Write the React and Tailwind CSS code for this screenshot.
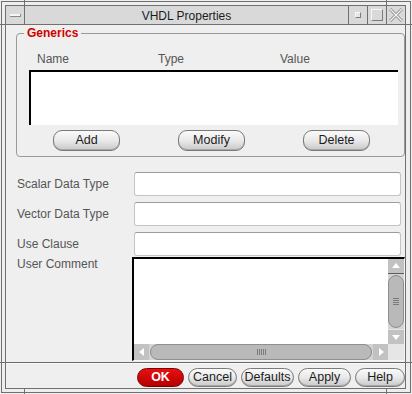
import React from 'react'

const line = 'border-[#707070]'
const pill =
  'flex items-center justify-center border border-[#7a7a7a] bg-linear-to-b from-[#fafafa] via-[#e9e9e9] to-[#c9c9c9] text-[#1c1c1c] shadow-[inset_0_-1px_0_#a9a9a9]'

function Arrow({ dir }) {
  const pts = {
    up: '1,7 5,2 9,7',
    down: '1,3 5,8 9,3',
    left: '7,1 2,5 7,9',
    right: '3,1 8,5 3,9',
  }
  return (
    <svg width="10" height="10" viewBox="0 0 10 10">
      <polygon points={pts[dir]} fill="#ffffff" />
    </svg>
  )
}

function TextRow({ label }) {
  return (
    <div className="flex items-center pl-[11px]">
      <div className="w-[117px] text-[12px] leading-[14px] text-[#555555]">{label}</div>
      <div className="w-[267px] h-[24px] bg-white rounded-[3px] border border-[#c4c4c4] border-t-[#9c9c9c]" />
    </div>
  )
}

export default function App() {
  return (
    <div className="relative w-[412px] h-[394px] bg-[#efefef] pt-px pl-px font-['Liberation_Sans',Arial,sans-serif]">
      {/* frame ticks */}
      <div className="absolute left-[24px] top-0 w-px h-[6px] bg-[#707070]" />
      <div className="absolute left-[386px] top-0 w-px h-[6px] bg-[#707070]" />
      <div className="absolute left-0 top-[24px] w-[6px] h-px bg-[#707070]" />
      <div className="absolute left-0 top-[362px] w-[6px] h-px bg-[#707070]" />
      <div className="absolute right-0 top-[24px] w-[7px] h-px bg-[#707070]" />
      <div className="absolute right-0 top-[362px] w-[7px] h-px bg-[#707070]" />
      <div className="absolute left-[24px] bottom-0 w-px h-[6px] bg-[#707070]" />
      <div className="absolute left-[386px] bottom-0 w-px h-[6px] bg-[#707070]" />

      <div className={`w-[410px] h-[392px] border ${line} pt-[3px] pl-[3px] pr-[4px] pb-[3px] bg-[#eeeeee]`}>
        <div className={`w-full h-full border ${line} bg-[#efefef] flex flex-col`}>
          {/* Title bar */}
          <div className={`flex h-[19px] border-b ${line} bg-[#d9d9d9]`}>
            <div className={`w-[19px] border-r ${line} flex items-center justify-center`}>
              <div className="w-[11px] h-[3px] bg-[#f6f6f6] border-b border-r border-[#8a8a8a]" />
            </div>
            <div className="flex-1 flex items-center justify-center text-[12px] text-[#1c1c1c] pt-px">
              VHDL Properties
            </div>
            <div className={`w-[19px] border-l ${line} flex items-center justify-center`}>
              <div className="w-[6px] h-[6px] bg-[#e6e6e6] border border-[#f8f8f8] border-b-[#7c7c7c] border-r-[#7c7c7c]" />
            </div>
            <div className={`w-[19px] border-l ${line} flex items-center justify-center`}>
              <div className="w-[12px] h-[12px] border border-[#f8f8f8] border-b-[#7c7c7c] border-r-[#7c7c7c]" />
            </div>
            <div className={`w-[19px] border-l ${line} flex items-center justify-center`}>
              <svg width="14" height="14" viewBox="0 0 14 14">
                <path d="M1 1 L13 13 M13 1 L1 13" stroke="#8c8c8c" strokeWidth="3" />
                <path d="M1 1 L13 13 M13 1 L1 13" stroke="#f4f4f4" strokeWidth="1.2" />
              </svg>
            </div>
          </div>

          {/* Generics group */}
          <div className="relative mt-[8px] ml-[10px] w-[389px] h-[124px] border border-[#9a9a9a] rounded-[4px]">
            <span className="absolute left-[7px] top-[-8px] px-[3px] bg-[#efefef] text-[12px] leading-[14px] font-bold text-[#d00000]">
              Generics
            </span>
            <div className="mt-[18px] flex h-[14px] pl-[20px] text-[12px] leading-[14px] text-[#555555]">
              <div className="w-[121px]">Name</div>
              <div className="w-[122px]">Type</div>
              <div>Value</div>
            </div>
            <div className="mt-[4px] ml-[12px] w-[369px] h-[55px] bg-white border-t-2 border-l-2 border-black" />
            <div className="mt-[5px] ml-[36px] flex gap-[58px] text-[12.5px]">
              <div className={`${pill} w-[67px] h-[21px] rounded-[9px]`}>Add</div>
              <div className={`${pill} w-[67px] h-[21px] rounded-[9px]`}>Modify</div>
              <div className={`${pill} w-[67px] h-[21px] rounded-[9px]`}>Delete</div>
            </div>
          </div>

          {/* Fields */}
          <div className="mt-[15px] flex flex-col gap-[6px]">
            <TextRow label="Scalar Data Type" />
            <TextRow label="Vector Data Type" />
            <TextRow label="Use Clause" />
          </div>
          <div className="mt-px flex pl-[11px]">
            <div className="w-[115px] text-[12px] leading-[14px] text-[#555555]">User Comment</div>
            <div className="w-[273px] h-[104px] bg-white border-t-2 border-l-2 border-black border-r border-b border-r-[#f4f4f4] border-b-[#f4f4f4] flex flex-col">
              <div className="flex flex-1">
                <div className="flex-1" />
                <div className="w-[16px] flex flex-col bg-[#d4d4d4]">
                  <div className="h-[15px] bg-[#c2c2c2] border-b border-[#5c5c5c] flex items-center justify-center">
                    <Arrow dir="up" />
                  </div>
                  <div className="flex-1 py-[1px]">
                    <div className="h-full rounded-full bg-[#b9b9b9] border border-[#8e8e8e] flex flex-col items-center justify-center gap-[1px]">
                      <div className="w-[6px] h-px bg-[#7a7a7a]" />
                      <div className="w-[6px] h-px bg-[#7a7a7a]" />
                      <div className="w-[6px] h-px bg-[#7a7a7a]" />
                      <div className="w-[6px] h-px bg-[#7a7a7a]" />
                    </div>
                  </div>
                  <div className="h-[15px] bg-[#c2c2c2] border-t border-[#e4e4e4] flex items-center justify-center">
                    <Arrow dir="down" />
                  </div>
                </div>
              </div>
              <div className="flex h-[16px]">
                <div className="flex-1 flex bg-[#d4d4d4]">
                  <div className="w-[15px] bg-[#c2c2c2] flex items-center justify-center">
                    <Arrow dir="left" />
                  </div>
                  <div className="flex-1 px-[1px]">
                    <div className="h-full rounded-full bg-[#b9b9b9] border border-[#8e8e8e] flex items-center justify-center gap-[1px]">
                      <div className="w-px h-[6px] bg-[#7a7a7a]" />
                      <div className="w-px h-[6px] bg-[#7a7a7a]" />
                      <div className="w-px h-[6px] bg-[#7a7a7a]" />
                      <div className="w-px h-[6px] bg-[#7a7a7a]" />
                      <div className="w-px h-[6px] bg-[#7a7a7a]" />
                    </div>
                  </div>
                  <div className="w-[15px] bg-[#c2c2c2] flex items-center justify-center">
                    <Arrow dir="right" />
                  </div>
                </div>
                <div className="w-[16px] bg-[#e6e6e6]" />
              </div>
            </div>
          </div>

          {/* Separator */}
          <div className="mt-px h-[2px] border-t border-[#6a6a6a] border-b border-b-[#fafafa]" />

          {/* Bottom buttons */}
          <div className="mt-[4px] flex justify-end gap-[4px] text-[12.5px] leading-none">
            <div className="w-[47px] h-[19px] rounded-full border border-[#7a0000] bg-linear-to-b from-[#e81010] to-[#b80000] text-white font-bold flex items-center justify-center">
              OK
            </div>
            <div className={`${pill} w-[49px] h-[19px] rounded-full`}>Cancel</div>
            <div className={`${pill} w-[53px] h-[19px] rounded-full`}>Defaults</div>
            <div className={`${pill} w-[53px] h-[19px] rounded-full`}>Apply</div>
            <div className={`${pill} w-[50px] h-[19px] rounded-full`}>Help</div>
          </div>
        </div>
      </div>
    </div>
  )
}
